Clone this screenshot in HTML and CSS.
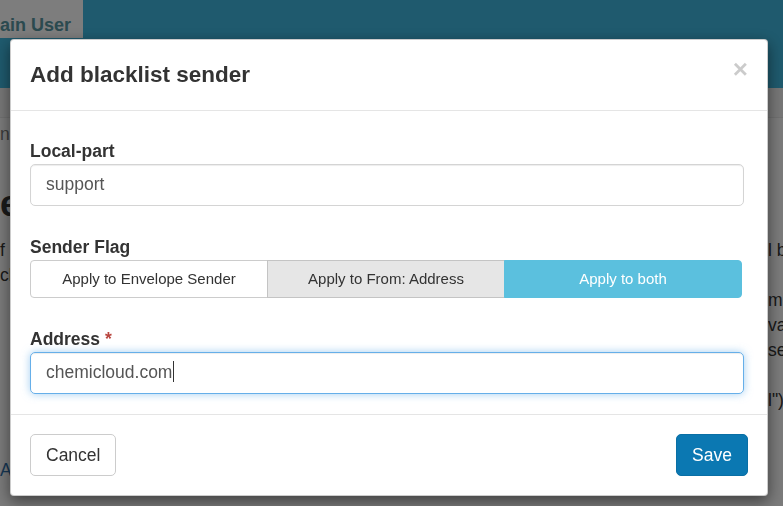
FILE: index.html
```html
<!DOCTYPE html>
<html lang="en">
<head>
    <meta charset="UTF-8">
    <meta name="viewport" content="width=device-width, initial-scale=1.0">
    <title>Add blacklist sender</title>
    <link rel="stylesheet" href="styles.css">
</head>
<body>
    <div class="page">
        <header class="navbar">
            <div class="navbar-top">
                <span class="nav-tab">Domain User</span>
            </div>
        </header>
        <div class="breadcrumb"></div>
        <main class="content">
            <div class="col col-left">
                <p class="muted">n</p>
                <h1>e</h1>
                <p class="text">f<br>cl</p>
                <a class="link">A</a>
            </div>
            <div class="col col-right">
                <p class="text">l be<br>&nbsp;<br>m<br>va<br>se<br>&nbsp;<br>l")</p>
            </div>
        </main>
    </div>

    <div class="backdrop"></div>

    <div class="modal">
        <div class="modal-header">
            <h4 class="modal-title">Add blacklist sender</h4>
            <span class="close">&times;</span>
        </div>
        <div class="modal-body">
            <div class="form-group">
                <label class="control-label">Local-part</label>
                <div class="form-control">support</div>
            </div>
            <div class="form-group">
                <label class="control-label">Sender Flag</label>
                <div class="btn-group">
                    <span class="btn-seg">Apply to Envelope Sender</span>
                    <span class="btn-seg pressed">Apply to From: Address</span>
                    <span class="btn-seg active">Apply to both</span>
                </div>
            </div>
            <div class="form-group">
                <label class="control-label">Address <span class="required">*</span></label>
                <div class="form-control focus">chemicloud.com<span class="caret"></span></div>
            </div>
        </div>
        <div class="modal-footer">
            <button type="button" class="btn btn-default">Cancel</button>
            <button type="button" class="btn btn-primary">Save</button>
        </div>
    </div>
</body>
</html>
```

FILE: styles.css
```css
* {
    box-sizing: border-box;
}
body {
    margin: 0;
    font-family: "Liberation Sans", Arial, sans-serif;
    color: #333;
    background-color: #f6f6f6;
    overflow: hidden;
}

/* page behind the dialog */
.page {
    height: 506px;
}
.navbar {
    height: 88px;
    background-color: #3eb5dc;
}
.navbar-top {
    display: flex;
    height: 38px;
}
.nav-tab {
    margin-left: -52px;
    padding: 12px 12px 0;
    line-height: 26px;
    font-size: 18px;
    font-weight: bold;
    color: #56949f;
    background-color: #fafafa;
}
.breadcrumb {
    height: 30px;
    background-color: #efefef;
    border-bottom: 1px solid #e2e2e2;
}
.content {
    display: flex;
    justify-content: space-between;
}
.col {
    overflow: hidden;
    white-space: nowrap;
    font-size: 17.5px;
    line-height: 25px;
}
.col p,
.col h1 {
    margin: 0;
}
.col-left {
    width: 11px;
}
.col-right {
    width: 15px;
}
.col-left .muted {
    margin-top: 4px;
    color: #777;
}
.col-left h1 {
    margin-top: 37px;
    font-size: 36px;
    line-height: 40px;
}
.col-left .text {
    margin-top: 14px;
}
.col-left .link {
    display: block;
    margin-top: 170px;
    color: #2f6ea8;
}
.col-right .text {
    margin-top: 120px;
}

.backdrop {
    position: fixed;
    inset: 0;
    background-color: rgba(0, 0, 0, 0.5);
}

/* dialog */
.modal {
    position: fixed;
    top: 39px;
    left: 10px;
    width: 758px;
    background: #fff;
    border: 1px solid rgba(0, 0, 0, 0.2);
    border-radius: 4px;
    box-shadow: 0 5px 15px rgba(0, 0, 0, 0.5);
}
.modal-header {
    display: flex;
    justify-content: space-between;
    padding: 18.75px 19px;
    border-bottom: 1px solid #e5e5e5;
}
.modal-title {
    margin: 0;
    font-size: 22.5px;
    line-height: 32px;
    font-weight: bold;
}
.close {
    align-self: flex-start;
    margin-top: -2.5px;
    font-size: 26px;
    line-height: 1;
    font-weight: bold;
    color: #000;
    opacity: 0.2;
}
.modal-body {
    padding: 28px 23.5px 20px 19px;
}
.form-group + .form-group {
    margin-top: 29px;
}
.control-label {
    display: block;
    font-size: 17.5px;
    line-height: 25px;
    font-weight: bold;
}
.required {
    color: #b9463f;
}
.form-control {
    height: 42.5px;
    padding: 7.5px 15px;
    font-size: 17.5px;
    line-height: 25px;
    color: #555;
    border: 1px solid #d4d4d4;
    border-radius: 5px;
    box-shadow: inset 0 1px 1px rgba(0, 0, 0, 0.075);
}
.form-control.focus {
    border-color: #66afe9;
    box-shadow: inset 0 1px 1px rgba(0, 0, 0, 0.075), 0 0 9px rgba(102, 175, 233, 0.6);
}
.caret {
    display: inline-block;
    width: 1px;
    height: 21px;
    margin-left: 1px;
    vertical-align: -4px;
    background-color: #333;
}
.btn-group {
    display: flex;
    width: calc(100% - 1.5px);
    height: 37.5px;
}
.btn-seg {
    flex: 1;
    display: flex;
    align-items: center;
    justify-content: center;
    font-size: 15px;
    color: #333;
    background: #fff;
    border: 1px solid #ccc;
}
.btn-seg:first-child {
    border-radius: 4px 0 0 4px;
}
.btn-seg + .btn-seg {
    margin-left: -1px;
}
.btn-seg.pressed {
    background-color: #e6e6e6;
    border-color: #c4c4c4;
}
.btn-seg.active {
    color: #fff;
    background-color: #5bc0de;
    border-color: #5bc0de;
    border-radius: 0 4px 4px 0;
}
.modal-footer {
    display: flex;
    justify-content: space-between;
    padding: 19px 19px;
    border-top: 1px solid #e5e5e5;
}
.btn {
    padding: 7.5px 15px;
    font-family: inherit;
    font-size: 17.5px;
    line-height: 25px;
    border: 1px solid #ccc;
    border-radius: 5px;
    cursor: pointer;
}
.btn-default {
    color: #333;
    background-color: #fff;
}
.btn-primary {
    color: #fff;
    background-color: #0b78b2;
    border-color: #0a6fa5;
}
```
